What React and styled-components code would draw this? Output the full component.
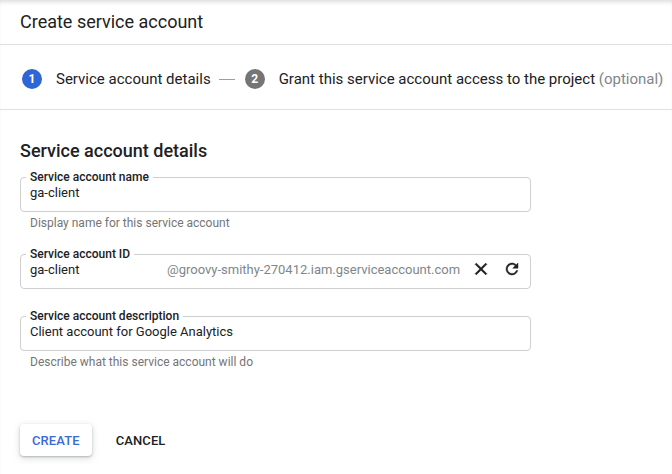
import React from 'react';
import styled, { createGlobalStyle } from 'styled-components';

const GlobalStyle = createGlobalStyle`
  html, body {
    margin: 0;
    padding: 0;
    background: #fff;
  }
  body {
    font-family: Roboto, "Liberation Sans", Arial, sans-serif;
    color: #202124;
    -webkit-font-smoothing: antialiased;
  }
`;

const Page = styled.div`
  width: 672px;
  height: 474px;
  overflow: hidden;
  background: #fff;
  box-shadow: inset 0 4px 4px -2px rgba(0, 0, 0, 0.14);
`;

const Header = styled.div`
  height: 45px;
  display: flex;
  align-items: center;
  padding: 0 20px 1px;
  border-bottom: 1px solid #e0e0e0;
  box-sizing: border-box;
`;

const Title = styled.h1`
  margin: 0;
  font-size: 18px;
  font-weight: 400;
  color: #202124;
`;

const Stepper = styled.div`
  height: 65px;
  display: flex;
  align-items: center;
  padding: 3px 22px 0;
  border-bottom: 1px solid #e0e0e0;
  box-sizing: border-box;
  white-space: nowrap;
`;

const Step = styled.div`
  display: flex;
  align-items: center;
  gap: 14px;
  font-size: 15px;
  color: #202124;
  flex-shrink: 0;
`;

const StepNumber = styled.span`
  width: 20px;
  height: 20px;
  border-radius: 50%;
  background: ${p => (p.active ? '#2f66d6' : '#757575')};
  color: #fff;
  font-size: 12px;
  font-weight: 700;
  display: inline-flex;
  align-items: center;
  justify-content: center;
`;

const Optional = styled.span`
  color: #80868b;
`;

const StepDash = styled.span`
  flex: 0 0 16px;
  height: 1px;
  background: #9e9e9e;
  margin: 1px 10px 0 8px;
`;

const Section = styled.div`
  padding: 29px 20px 0;
  width: 551px;
  box-sizing: border-box;
`;

const SectionTitle = styled.h2`
  margin: 0 0 7px;
  font-size: 18px;
  line-height: 24px;
  font-weight: 500;
  color: #202124;
`;

const Fieldset = styled.fieldset`
  margin: 0 0 ${p => (p.bare ? 20 : 0)}px;
  padding: 0 9px 11px;
  border: 1px solid #cfcfcf;
  border-radius: 4px;
  min-width: 0;
`;

const Legend = styled.legend`
  padding: 0 4px;
  margin-left: -4px;
  font-size: 12px;
  line-height: 14px;
  font-weight: 500;
  color: #202124;
`;

const InputRow = styled.div`
  display: flex;
  align-items: center;
  height: 16px;
  font-size: 13px;
  color: #202124;
  white-space: nowrap;
`;

const Value = styled.span`
  flex: ${p => (p.fixed ? '0 0 137px' : '1')};
`;

const Suffix = styled.span`
  color: #80868b;
  flex: 1;
`;

const IconButton = styled.span`
  display: inline-flex;
  align-items: center;
  justify-content: center;
  margin-left: ${p => p.gap || 0}px;
  color: #202124;
`;

const Helper = styled.div`
  margin: 3px 0 16px;
  font-size: 12px;
  line-height: 16px;
  color: #757575;
  padding-left: 10px;
`;

const Actions = styled.div`
  display: flex;
  align-items: center;
  gap: 12px;
  margin-top: 54px;
`;

const Button = styled.button`
  height: 32px;
  padding: 0 12px;
  border: none;
  border-radius: 4px;
  background: #fff;
  font-family: Roboto, "Liberation Sans", Arial, sans-serif;
  font-size: 13px;
  font-weight: 500;
  letter-spacing: 0.1px;
  color: ${p => (p.primary ? '#3b6ad6' : '#202124')};
  box-shadow: ${p =>
    p.primary
      ? '0 1px 2px rgba(60,64,67,0.3), 0 2px 6px 1px rgba(60,64,67,0.15)'
      : 'none'};
  cursor: pointer;
`;

const CloseIcon = () => (
  <svg width="20" height="20" viewBox="0 0 24 24" fill="currentColor">
    <path d="M19 6.41L17.59 5 12 10.59 6.41 5 5 6.41 10.59 12 5 17.59 6.41 19 12 13.41 17.59 19 19 17.59 13.41 12z" stroke="currentColor" strokeWidth="0.8" />
  </svg>
);

const RefreshIcon = () => (
  <svg width="18" height="18" viewBox="0 0 24 24" fill="currentColor">
    <path d="M17.65 6.35C16.2 4.9 14.21 4 12 4c-4.42 0-7.99 3.58-7.99 8s3.57 8 7.99 8c3.73 0 6.84-2.55 7.73-6h-2.08c-.82 2.33-3.04 4-5.65 4-3.31 0-6-2.69-6-6s2.69-6 6-6c1.66 0 3.14.69 4.22 1.78L13 11h7V4l-2.35 2.35z" stroke="currentColor" strokeWidth="0.6" />
  </svg>
);

const Field = ({ label, value, helper, children }) => (
  <div>
    <Fieldset bare={!helper}>
      <Legend>{label}</Legend>
      <InputRow>{children || <Value>{value}</Value>}</InputRow>
    </Fieldset>
    {helper && <Helper>{helper}</Helper>}
  </div>
);

export default function App() {
  return (
    <Page>
      <GlobalStyle />
      <Header>
        <Title>Create service account</Title>
      </Header>
      <Stepper>
        <Step>
          <StepNumber active>1</StepNumber>
          Service account details
        </Step>
        <StepDash />
        <Step>
          <StepNumber>2</StepNumber>
          <span>
            Grant this service account access to the project <Optional>(optional)</Optional>
          </span>
        </Step>
      </Stepper>
      <Section>
        <SectionTitle>Service account details</SectionTitle>
        <Field
          label="Service account name"
          value="ga-client"
          helper="Display name for this service account"
        />
        <Field label="Service account ID">
          <Value fixed>ga-client</Value>
          <Suffix>@groovy-smithy-270412.iam.gserviceaccount.com</Suffix>
          <IconButton>
            <CloseIcon />
          </IconButton>
          <IconButton gap={12}>
            <RefreshIcon />
          </IconButton>
        </Field>
        <Field
          label="Service account description"
          value="Client account for Google Analytics"
          helper="Describe what this service account will do"
        />
        <Actions>
          <Button primary>CREATE</Button>
          <Button>CANCEL</Button>
        </Actions>
      </Section>
    </Page>
  );
}
